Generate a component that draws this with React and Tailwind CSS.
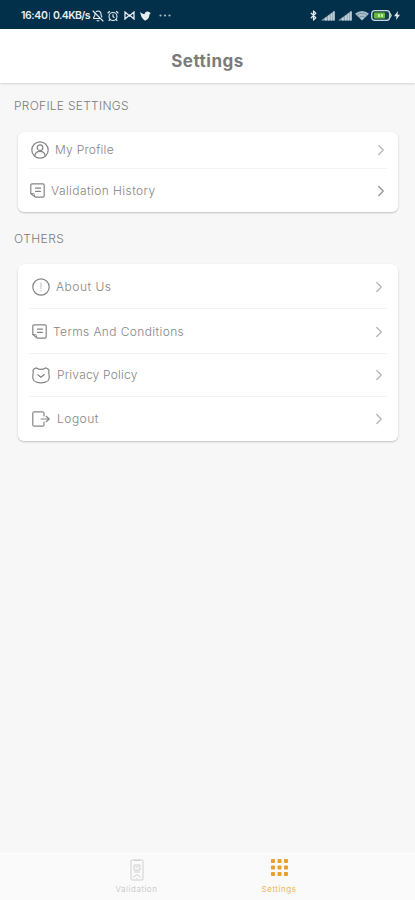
import React from "react";
import { ChevronRight, Bluetooth, BellOff, AlarmClock } from "lucide-react";

const iconProps = {
  fill: "none",
  stroke: "currentColor",
  strokeWidth: "1.2",
  strokeLinecap: "round",
  strokeLinejoin: "round",
};

const ProfileIcon = () => (
  <svg width="18" height="18" viewBox="0 0 18 18" {...iconProps}>
    <circle cx="9" cy="9" r="8.2" />
    <circle cx="9" cy="6.7" r="2.8" />
    <path d="M3.700 15c.5-3 2.500-4.600 5.300-4.600s4.800 1.600 5.300 4.600" />
  </svg>
);

const NoteIcon = () => (
  <svg width="15" height="15" viewBox="0 0 15 15" {...iconProps}>
    <path d="M2 .8h10.800q1.400 0 1.400 1.400v10.600q0 1.400-1.400 1.400H5.500L.8 10.500V2Q.8.800 2 .8Z" />
    <path d="M1 10.500h2.500q.8 0 .9 1l.3 2" strokeWidth="0.9" />
    <path d="M5.500 5.200h5M5.500 8.300h5" />
  </svg>
);

const InfoIcon = () => (
  <svg width="18" height="18" viewBox="0 0 18 18" {...iconProps}>
    <circle cx="9" cy="9" r="8.2" />
    <path d="M9 5v5.500M9 12.800v.3" strokeOpacity="0.35" strokeWidth="1.5" />
  </svg>
);

const PrivacyIcon = () => (
  <svg width="18" height="17" viewBox="0 0 18 17" {...iconProps}>
    <path d="M4.500.9Q6.500 2.300 9 2.300T13.500.9q2.700.5 3.600 2.700-.6 1.400-.2 3 .5 2.300.2 5-.7 2.800-3.600 3.600-4.500 1.200-9 0-2.900-.8-3.600-3.600-.3-2.700.2-5 .4-1.600-.2-3Q1.800 1.400 4.500.9Z" />
    <path d="m5.800 7.800 3.100 2.400 3.400-2.700" />
  </svg>
);

const LogoutIcon = () => (
  <svg width="18" height="16" viewBox="0 0 18 16" {...iconProps}>
    <path d="M12 5V2.300Q12 .8 10.500.8H2.300Q.8.800.8 2.300v11.400q0 1.500 1.500 1.500h8.200q1.500 0 1.500-1.500V11" />
    <path d="M9 8h8.200M14.200 5.300 17.200 8l-3 2.700" />
  </svg>
);

const SignalIcon = () => (
  <svg width="14" height="11" viewBox="0 0 14 11">
    <path d="M0 10.500 13.500.8v9.700Z" fill="#8aa3b1" />
    <path d="M4 7.700h1.700v2.800H4zM7 5.600h1.700v4.900H7zM9.700 3.600h1.500v6.900H9.700zM12.200 1.600h1.500v8.900h-1.500z" fill="#c3d2db" />
  </svg>
);

const WifiIcon = () => (
  <svg width="14" height="11" viewBox="0 0 14 11">
    <path d="M0 3.800Q7-2 14 3.800L7 10.500Z" fill="#a9bfcb" />
    <path d="M2 5.200q5-4 10 0M4 7.300q3-2.400 6 0" fill="none" stroke="#55798e" strokeWidth="0.7" />
  </svg>
);

const BatteryIcon = () => (
  <svg width="22" height="11" viewBox="0 0 22 11">
    <rect x="0.7" y="0.7" width="18" height="9.6" rx="3" fill="#173f50" stroke="#c9d8dd" strokeWidth="1.3" />
    <rect x="3" y="2.4" width="11" height="6.2" rx="1" fill="#62bd32" />
    <path d="M8 4v3M11 4v3" stroke="#e3f5d9" strokeWidth="1.5" />
    <path d="M19.300 3.300q2 2.200 0 4.400" fill="#c9d8dd" stroke="#c9d8dd" />
  </svg>
);

const StatusBar = () => (
  <div className="flex h-[29px] items-center bg-[#022f49] pt-[2px] pr-[15px] pl-[21px] text-[#e5edf1]">
    <span className="w-[27px] text-[10.5px] font-semibold tracking-[-0.4px] whitespace-nowrap">16:40</span>
    <span className="mr-[3px] ml-[1px] h-[8px] w-px bg-[#839cab]" />
    <span className="w-[38px] text-[10.5px] font-semibold tracking-[-0.6px] whitespace-nowrap">0.4KB/s</span>
    <BellOff className="ml-[1px]" size={12} strokeWidth={2.2} />
    <AlarmClock className="ml-[3px]" size={12} strokeWidth={2.2} />
    <svg className="ml-[5px]" width="11" height="9" viewBox="0 0 11 9" fill="none" stroke="currentColor" strokeWidth="1.3">
      <path d="M1 8V1l4.500 4L10 1v7L5.500 4Z" />
    </svg>
    <svg className="ml-[5px]" width="11" height="10" viewBox="0 0 11 10" fill="currentColor">
      <path d="M0 1q2 2 4.500 2.300Q5 .2 8 .5L10.800 2 9.500 3.500Q9.200 8.300 5 9.700L3 8 1.500 6Z" />
    </svg>
    <svg className="ml-[8px]" width="12" height="3" viewBox="0 0 12 3" fill="#a9bbc5">
      <circle cx="1.5" cy="1.5" r="1.1" />
      <circle cx="6" cy="1.5" r="1.1" />
      <circle cx="10.5" cy="1.5" r="1.1" />
    </svg>
    <div className="ml-auto flex items-center">
      <Bluetooth className="mr-[2px]" size={11} strokeWidth={2.6} />
      <SignalIcon />
      <span className="w-[3px]" />
      <SignalIcon />
      <span className="w-[3px]" />
      <WifiIcon />
      <span className="w-[2px]" />
      <BatteryIcon />
      <svg className="ml-[1px]" width="6" height="9" viewBox="0 0 6 9" fill="currentColor">
        <path d="M4 0 0 5.200h2.500L2 9l4-5.200H3.500Z" />
      </svg>
    </div>
  </div>
);

const profileItems = [
  {
    label: "My Profile",
    icon: <ProfileIcon />,
    row: "h-[36px] pl-[13px] gap-[6px] pr-[9px]",
    text: "tracking-[0.25px]",
    arrow: "text-[#b8b8b8]",
  },
  {
    label: "Validation History",
    icon: <NoteIcon />,
    row: "h-[43px] pl-[12px] gap-[6px] pr-[9px]",
    text: "tracking-[0.42px]",
    arrow: "text-[#969696]",
  },
];

const otherItems = [
  {
    label: "About Us",
    icon: <InfoIcon />,
    row: "h-[44px] pl-[14px] gap-[6px] pr-[11px] pt-[2px]",
    text: "tracking-[0.5px]",
    arrow: "text-[#b5b5b5]",
  },
  {
    label: "Terms And Conditions",
    icon: <NoteIcon />,
    row: "h-[44px] pl-[14px] gap-[6px] pr-[11px] pt-px",
    text: "tracking-[0.38px]",
    arrow: "text-[#b5b5b5]",
  },
  {
    label: "Privacy Policy",
    icon: <PrivacyIcon />,
    row: "h-[42px] pl-[14px] gap-[7px] pr-[11px]",
    text: "tracking-[0.2px]",
    arrow: "text-[#b5b5b5]",
  },
  {
    label: "Logout",
    icon: <LogoutIcon />,
    row: "h-[44px] pl-[14px] gap-[7px] pr-[11px] pb-px",
    text: "tracking-[0.5px]",
    arrow: "text-[#b5b5b5]",
  },
];

const SettingsCard = ({ items }) => (
  <div className="mr-[17px] ml-[18px] rounded-[6px] bg-white shadow-[0_1px_2px_rgba(0,0,0,0.22)]">
    {items.map((item, index) => (
      <React.Fragment key={item.label}>
        {index > 0 && <div className="mx-[11px] h-px bg-[#f3f3f3]" />}
        <button type="button" className={`flex w-full items-center text-[#858585] ${item.row}`}>
          {item.icon}
          <span className={`text-[12px] leading-4 font-light whitespace-nowrap ${item.text}`}>
            {item.label}
          </span>
          <ChevronRight className={`-mr-[1px] ml-auto ${item.arrow}`} size={18} strokeWidth={1.7} />
        </button>
      </React.Fragment>
    ))}
  </div>
);

const BottomNav = () => (
  <nav className="flex h-[47px] justify-center border-t border-white bg-[#fafafa] pt-[5px]">
    <button type="button" className="flex w-[143px] flex-col items-center text-[#cfcfcf]">
      <svg width="14" height="22" viewBox="0 0 14 22" fill="none" stroke="currentColor">
        <rect x="1" y="1" width="12" height="20" rx="1" />
        <path d="M4 1.500h6M4 6h6v5H4zM5.500 8h3M4 13h6M3 18.500l4-3 4 3" />
        <path d="M6.500 19.500h1" />
      </svg>
      <span className="mt-[3px] text-[8px] leading-[11px] font-light tracking-[0.6px] text-[#bdbdbd]">Validation</span>
    </button>
    <button type="button" className="flex w-[142px] flex-col items-center text-[#efb654]">
      <svg width="17" height="17" viewBox="0 0 17 17" fill="#e9a12b">
        {[0, 6.5, 13].map((y) =>
          [0, 6.5, 13].map((x) => (
            <rect key={`${x}-${y}`} x={x} y={y} width="4" height="4" rx="0.8" />
          ))
        )}
      </svg>
      <span className="mt-[8px] text-[8px] leading-[11px] tracking-[0.55px]">Settings</span>
    </button>
  </nav>
);

const App = () => {
  return (
    <div className="flex h-[900px] w-full flex-col overflow-hidden bg-[#f7f7f7] font-['Inter','Open_Sans',sans-serif]">
      <StatusBar />
      <header className="flex h-[54px] items-center justify-center bg-white pt-[9px] shadow-[0_1px_2px_rgba(0,0,0,0.14)]">
        <h1 className="text-[17px] leading-5 font-bold tracking-[0.5px] text-[#7b7b7b]">Settings</h1>
      </header>
      <main className="flex-1">
        <h2 className="mt-[15px] mb-[18px] ml-[14px] text-[12px] leading-4 font-light tracking-[0.27px] text-[#7b7b7b]">
          PROFILE SETTINGS
        </h2>
        <SettingsCard items={profileItems} />
        <h2 className="mt-[19px] mb-[17px] ml-[14px] text-[12px] leading-4 font-light tracking-[0.45px] text-[#7b7b7b]">
          OTHERS
        </h2>
        <SettingsCard items={otherItems} />
      </main>
      <BottomNav />
    </div>
  );
};

export default App;
